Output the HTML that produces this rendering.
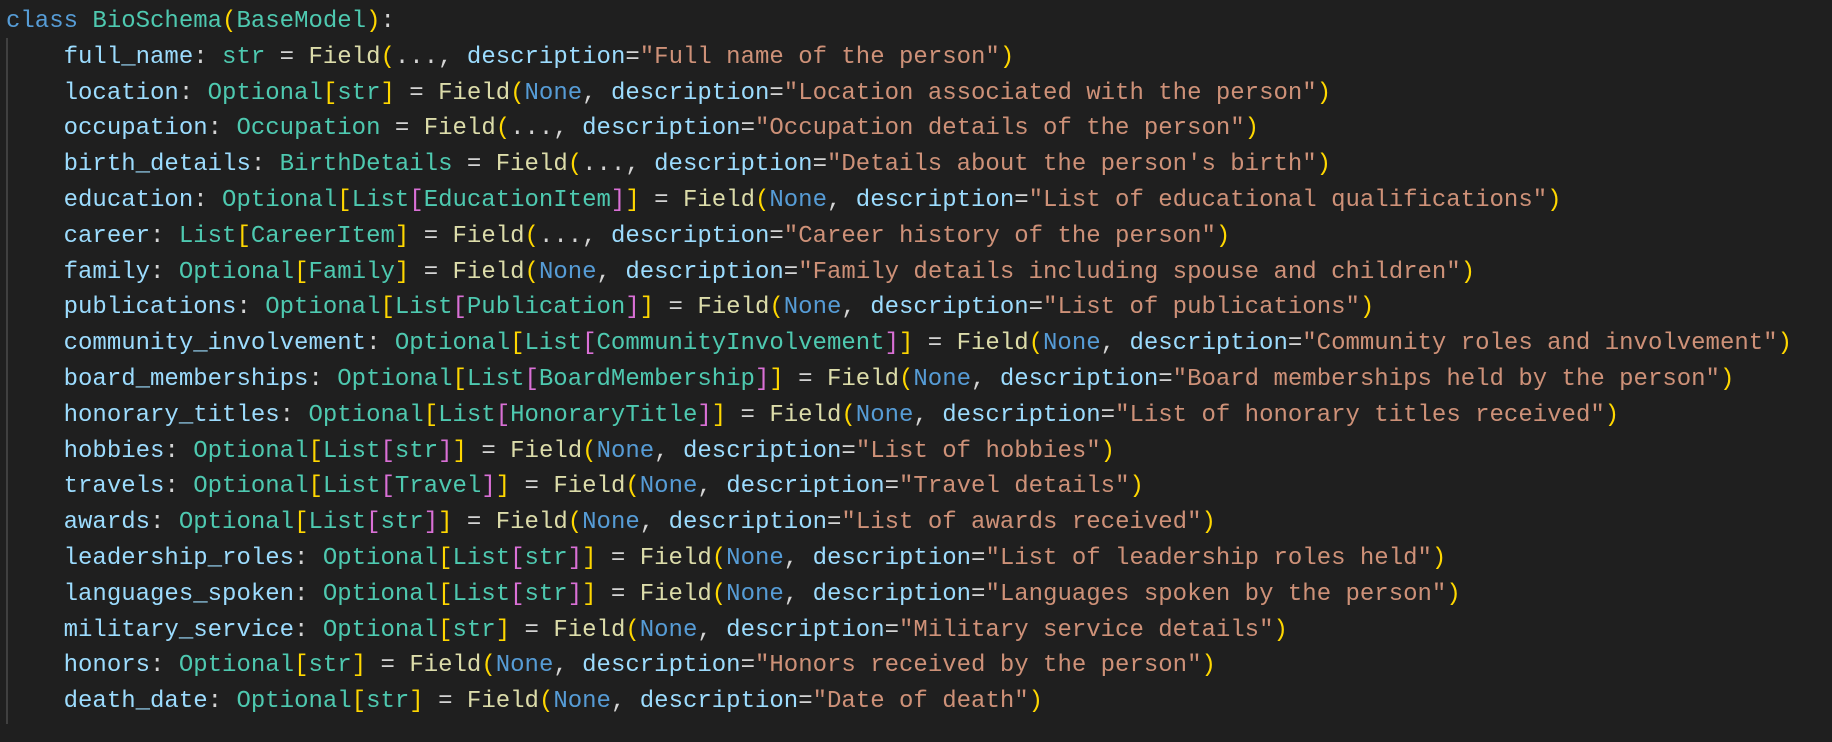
<!DOCTYPE html>
<html><head><meta charset="utf-8"><style>
html,body{margin:0;padding:0;background:#1f1f1f;width:1832px;height:742px;overflow:hidden}
pre{margin:0;position:absolute;left:6px;top:4px;font-family:"Liberation Mono",monospace;font-size:24px;line-height:35.8px;color:#d4d4d4;white-space:pre}
.g{position:absolute;left:6px;top:38px;width:2px;height:686px;background:#404040}
.k{color:#569cd6}.c{color:#4ec9b0}.v{color:#9cdcfe}.f{color:#dcdcaa}.s{color:#ce9178}.y{color:#ffd700}.p{color:#da70d6}
</style></head><body>
<div class="g"></div>
<pre><span class="k">class</span> <span class="c">BioSchema</span><span class="y">(</span><span class="c">BaseModel</span><span class="y">)</span>:
    <span class="v">full_name</span>: <span class="c">str</span> = <span class="f">Field</span><span class="y">(</span>..., <span class="v">description</span>=<span class="s">"Full name of the person"</span><span class="y">)</span>
    <span class="v">location</span>: <span class="c">Optional</span><span class="y">[</span><span class="c">str</span><span class="y">]</span> = <span class="f">Field</span><span class="y">(</span><span class="k">None</span>, <span class="v">description</span>=<span class="s">"Location associated with the person"</span><span class="y">)</span>
    <span class="v">occupation</span>: <span class="c">Occupation</span> = <span class="f">Field</span><span class="y">(</span>..., <span class="v">description</span>=<span class="s">"Occupation details of the person"</span><span class="y">)</span>
    <span class="v">birth_details</span>: <span class="c">BirthDetails</span> = <span class="f">Field</span><span class="y">(</span>..., <span class="v">description</span>=<span class="s">"Details about the person's birth"</span><span class="y">)</span>
    <span class="v">education</span>: <span class="c">Optional</span><span class="y">[</span><span class="c">List</span><span class="p">[</span><span class="c">EducationItem</span><span class="p">]</span><span class="y">]</span> = <span class="f">Field</span><span class="y">(</span><span class="k">None</span>, <span class="v">description</span>=<span class="s">"List of educational qualifications"</span><span class="y">)</span>
    <span class="v">career</span>: <span class="c">List</span><span class="y">[</span><span class="c">CareerItem</span><span class="y">]</span> = <span class="f">Field</span><span class="y">(</span>..., <span class="v">description</span>=<span class="s">"Career history of the person"</span><span class="y">)</span>
    <span class="v">family</span>: <span class="c">Optional</span><span class="y">[</span><span class="c">Family</span><span class="y">]</span> = <span class="f">Field</span><span class="y">(</span><span class="k">None</span>, <span class="v">description</span>=<span class="s">"Family details including spouse and children"</span><span class="y">)</span>
    <span class="v">publications</span>: <span class="c">Optional</span><span class="y">[</span><span class="c">List</span><span class="p">[</span><span class="c">Publication</span><span class="p">]</span><span class="y">]</span> = <span class="f">Field</span><span class="y">(</span><span class="k">None</span>, <span class="v">description</span>=<span class="s">"List of publications"</span><span class="y">)</span>
    <span class="v">community_involvement</span>: <span class="c">Optional</span><span class="y">[</span><span class="c">List</span><span class="p">[</span><span class="c">CommunityInvolvement</span><span class="p">]</span><span class="y">]</span> = <span class="f">Field</span><span class="y">(</span><span class="k">None</span>, <span class="v">description</span>=<span class="s">"Community roles and involvement"</span><span class="y">)</span>
    <span class="v">board_memberships</span>: <span class="c">Optional</span><span class="y">[</span><span class="c">List</span><span class="p">[</span><span class="c">BoardMembership</span><span class="p">]</span><span class="y">]</span> = <span class="f">Field</span><span class="y">(</span><span class="k">None</span>, <span class="v">description</span>=<span class="s">"Board memberships held by the person"</span><span class="y">)</span>
    <span class="v">honorary_titles</span>: <span class="c">Optional</span><span class="y">[</span><span class="c">List</span><span class="p">[</span><span class="c">HonoraryTitle</span><span class="p">]</span><span class="y">]</span> = <span class="f">Field</span><span class="y">(</span><span class="k">None</span>, <span class="v">description</span>=<span class="s">"List of honorary titles received"</span><span class="y">)</span>
    <span class="v">hobbies</span>: <span class="c">Optional</span><span class="y">[</span><span class="c">List</span><span class="p">[</span><span class="c">str</span><span class="p">]</span><span class="y">]</span> = <span class="f">Field</span><span class="y">(</span><span class="k">None</span>, <span class="v">description</span>=<span class="s">"List of hobbies"</span><span class="y">)</span>
    <span class="v">travels</span>: <span class="c">Optional</span><span class="y">[</span><span class="c">List</span><span class="p">[</span><span class="c">Travel</span><span class="p">]</span><span class="y">]</span> = <span class="f">Field</span><span class="y">(</span><span class="k">None</span>, <span class="v">description</span>=<span class="s">"Travel details"</span><span class="y">)</span>
    <span class="v">awards</span>: <span class="c">Optional</span><span class="y">[</span><span class="c">List</span><span class="p">[</span><span class="c">str</span><span class="p">]</span><span class="y">]</span> = <span class="f">Field</span><span class="y">(</span><span class="k">None</span>, <span class="v">description</span>=<span class="s">"List of awards received"</span><span class="y">)</span>
    <span class="v">leadership_roles</span>: <span class="c">Optional</span><span class="y">[</span><span class="c">List</span><span class="p">[</span><span class="c">str</span><span class="p">]</span><span class="y">]</span> = <span class="f">Field</span><span class="y">(</span><span class="k">None</span>, <span class="v">description</span>=<span class="s">"List of leadership roles held"</span><span class="y">)</span>
    <span class="v">languages_spoken</span>: <span class="c">Optional</span><span class="y">[</span><span class="c">List</span><span class="p">[</span><span class="c">str</span><span class="p">]</span><span class="y">]</span> = <span class="f">Field</span><span class="y">(</span><span class="k">None</span>, <span class="v">description</span>=<span class="s">"Languages spoken by the person"</span><span class="y">)</span>
    <span class="v">military_service</span>: <span class="c">Optional</span><span class="y">[</span><span class="c">str</span><span class="y">]</span> = <span class="f">Field</span><span class="y">(</span><span class="k">None</span>, <span class="v">description</span>=<span class="s">"Military service details"</span><span class="y">)</span>
    <span class="v">honors</span>: <span class="c">Optional</span><span class="y">[</span><span class="c">str</span><span class="y">]</span> = <span class="f">Field</span><span class="y">(</span><span class="k">None</span>, <span class="v">description</span>=<span class="s">"Honors received by the person"</span><span class="y">)</span>
    <span class="v">death_date</span>: <span class="c">Optional</span><span class="y">[</span><span class="c">str</span><span class="y">]</span> = <span class="f">Field</span><span class="y">(</span><span class="k">None</span>, <span class="v">description</span>=<span class="s">"Date of death"</span><span class="y">)</span></pre>
</body></html>
